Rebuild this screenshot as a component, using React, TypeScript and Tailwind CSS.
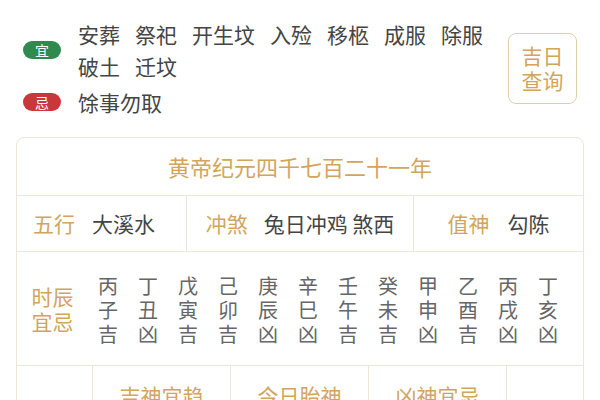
const gold = "text-[#d2a55c]";

const hours = [
  ["丙", "子", "吉"],
  ["丁", "丑", "凶"],
  ["戊", "寅", "吉"],
  ["己", "卯", "吉"],
  ["庚", "辰", "凶"],
  ["辛", "巳", "凶"],
  ["壬", "午", "吉"],
  ["癸", "未", "吉"],
  ["甲", "申", "凶"],
  ["乙", "酉", "吉"],
  ["丙", "戌", "凶"],
  ["丁", "亥", "凶"],
];

function Badge({ label, color }: { label: string; color: string }) {
  return (
    <div className={`w-[38px] h-[18px] rounded-full ${color} text-white text-[14px] leading-none flex items-center justify-center shrink-0`}>
      {label}
    </div>
  );
}

function Words({ items }: { items: string[] }) {
  return (
    <div className="flex gap-x-[15px]">
      {items.map((w, i) => (
        <span key={i}>{w}</span>
      ))}
    </div>
  );
}

export default function App() {
  return (
    <div
      className="w-[600px] h-[400px] overflow-hidden bg-white text-[#444]"
      style={{ fontFamily: '"Noto Sans CJK SC", "Noto Sans", sans-serif' }}
    >
      <div className="flex items-center pl-[23px] pr-[23px] pt-[18px]">
        <div className="flex flex-col gap-[4px]">
          <div className="flex items-center gap-[17px]">
            <Badge label="宜" color="bg-[#2f8a4f]" />
            <div className="text-[21px] leading-[32px]">
              <Words items={["安葬", "祭祀", "开生坟", "入殓", "移柩", "成服", "除服"]} />
              <Words items={["破土", "迁坟"]} />
            </div>
          </div>
          <div className="flex items-center gap-[17px]">
            <Badge label="忌" color="bg-[#c9373b]" />
            <div className="text-[21px] leading-[32px]">馀事勿取</div>
          </div>
        </div>
        <div className={`ml-auto w-[69px] h-[71px] border border-[#dfcfa6] rounded-[8px] ${gold} text-[21px] leading-[25px] flex flex-col items-center justify-center`}>
          <span>吉日</span>
          <span>查询</span>
        </div>
      </div>

      <div className="mx-[16px] mt-[19px] border border-[#eee7d8] rounded-[8px]">
        <div className={`h-[58px] flex items-center justify-center border-b border-[#eee7d8] ${gold} text-[22px]`}>
          黄帝纪元四千七百二十一年
        </div>

        <div className="h-[56px] flex border-b border-[#eee7d8] text-[21px]">
          <div className="w-[170px] flex items-center pl-[16px] gap-[17px] border-r border-[#eee7d8]">
            <span className={gold}>五行</span>
            <span>大溪水</span>
          </div>
          <div className="w-[227px] flex items-center justify-center gap-[16px] border-r border-[#eee7d8]">
            <span className={gold}>冲煞</span>
            <span>兔日冲鸡 煞西</span>
          </div>
          <div className="flex-1 flex items-center justify-center gap-[18px]">
            <span className={gold}>值神</span>
            <span>勾陈</span>
          </div>
        </div>

        <div className="h-[114px] flex items-center border-b border-[#eee7d8]">
          <div className={`w-[71px] flex flex-col items-center ${gold} text-[21px] leading-[25px]`}>
            <span>时辰</span>
            <span>宜忌</span>
          </div>
          <div className="flex pt-[2px]">
            {hours.map((col, i) => (
              <div key={i} className="w-[40px] flex flex-col items-center text-[20px] leading-[24px] text-[#666]">
                {col.map((c, j) => (
                  <span key={j}>{c}</span>
                ))}
              </div>
            ))}
          </div>
        </div>

        <div className={`h-[60px] flex ${gold} text-[21px]`}>
          <div className="w-[76px] border-r border-[#eee7d8]" />
          <div className="w-[138px] border-r border-[#eee7d8] flex justify-center pt-[14px]">吉神宜趋</div>
          <div className="w-[138px] border-r border-[#eee7d8] flex justify-center pt-[14px]">今日胎神</div>
          <div className="w-[138px] border-r border-[#eee7d8] flex justify-center pt-[14px]">凶神宜忌</div>
          <div className="flex-1" />
        </div>
      </div>
    </div>
  );
}
